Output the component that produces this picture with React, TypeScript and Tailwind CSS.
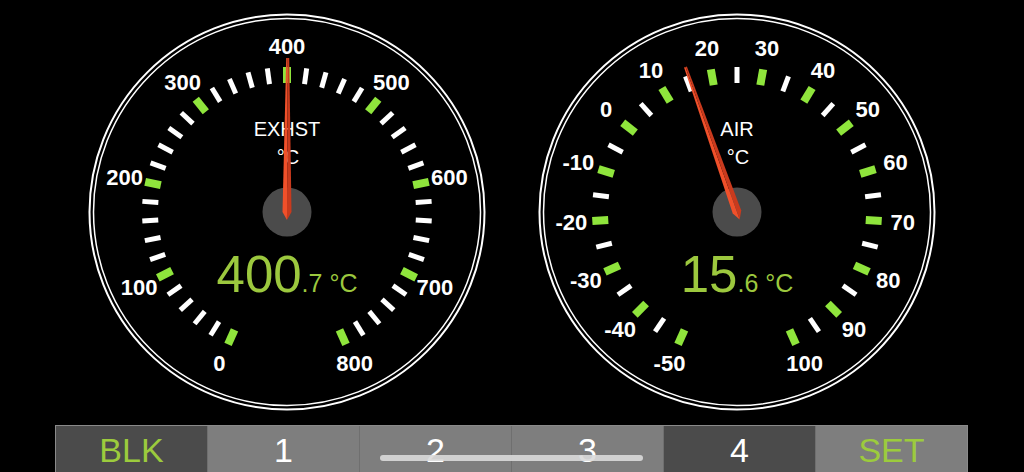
import React from "react";

type GaugeProps = {
    min: number;
    max: number;
    major: number;
    minor: number;
    value: number;
    title: string;
};

const SPAN = 156;
const C = 200;

const polar = (r: number, a: number) => {
    const rad = (a * Math.PI) / 180;
    return { x: C + r * Math.sin(rad), y: C - r * Math.cos(rad) };
};

const Gauge = ({ min, max, major, minor, value, title }: GaugeProps) => {
    const toAngle = (v: number) => -SPAN + ((v - min) / (max - min)) * SPAN * 2;
    const ticks: { v: number; big: boolean }[] = [];
    const count = Math.round((max - min) / minor);
    for (let i = 0; i <= count; i++) {
        const v = min + i * minor;
        ticks.push({ v, big: Math.abs((v - min) % major) < 0.001 });
    }
    const needle = toAngle(value);
    const whole = Math.trunc(value).toString();
    const frac = "." + Math.round((Math.abs(value) % 1) * 10).toString();

    return (
        <svg width={400} height={400} viewBox="0 0 400 400" className="shrink-0">
            <circle cx={C} cy={C} r={197.5} fill="none" stroke="#ffffff" strokeWidth={2} />
            <circle cx={C} cy={C} r={193.5} fill="none" stroke="#ffffff" strokeWidth={1.5} />

            {ticks.map((t) =>
                t.big ? (
                    <rect
                        key={t.v}
                        x={-4}
                        y={-145}
                        width={8}
                        height={16}
                        fill="#8fe53c"
                        transform={`translate(${C} ${C}) rotate(${toAngle(t.v)})`}
                    />
                ) : (
                    <rect
                        key={t.v}
                        x={-2.5}
                        y={-145}
                        width={5}
                        height={16}
                        fill="#ffffff"
                        transform={`translate(${C} ${C}) rotate(${toAngle(t.v)})`}
                    />
                )
            )}

            {ticks
                .filter((t) => t.big)
                .map((t) => {
                    const p = polar(166, toAngle(t.v));
                    return (
                        <text
                            key={`l${t.v}`}
                            x={p.x}
                            y={p.y}
                            fill="#ffffff"
                            fontSize={22}
                            fontWeight={700}
                            textAnchor="middle"
                            dominantBaseline="central"
                            fontFamily='"Liberation Sans", Arial, sans-serif'
                        >
                            {t.v}
                        </text>
                    );
                })}

            <g fontFamily='"Liberation Sans", Arial, sans-serif' fill="#ffffff" textAnchor="middle">
                <text x={C} y={117} fontSize={20} dominantBaseline="central">
                    {title}
                </text>
                <text x={C + 1} y={145} fontSize={20} dominantBaseline="central">
                    °C
                </text>
            </g>

            <text
                x={C}
                y={280}
                fill="#9cc83e"
                textAnchor="middle"
                fontFamily='"Liberation Sans", Arial, sans-serif'
            >
                <tspan fontSize={51}>{whole}</tspan>
                <tspan fontSize={25}>{frac}</tspan>
                <tspan fontSize={25}> °C</tspan>
            </text>

            <circle cx={C} cy={C} r={24.5} fill="#4b4b4b" />

            <g transform={`translate(${C} ${C}) rotate(${needle})`}>
                <polygon points="-1.5,-154 0,-154 0,8 -4.5,0" fill="#f0502a" />
                <polygon points="0,-154 1.5,-154 4.5,0 0,8" fill="#c93a1d" />
            </g>
        </svg>
    );
};

const cells = [
    { label: "BLK", dark: true, green: true },
    { label: "1", dark: false, green: false },
    { label: "2", dark: false, green: false },
    { label: "3", dark: false, green: false },
    { label: "4", dark: true, green: false },
    { label: "SET", dark: false, green: true },
];

export default function App() {
    return (
        <div
            className="relative h-[472px] w-[1024px] overflow-hidden bg-black"
            style={{ fontFamily: '"Liberation Sans", Arial, sans-serif' }}
        >
            <div className="flex gap-[50px] pl-[87px] pt-[12px]">
                <Gauge min={0} max={800} major={100} minor={20} value={400.7} title="EXHST" />
                <Gauge min={-50} max={100} major={10} minor={5} value={15.6} title="AIR" />
            </div>

            <div className="ml-[55px] mt-[13px] flex h-[50px] w-[913px] border border-[#8a8a8a]">
                {cells.map((c, i) => (
                    <div
                        key={c.label}
                        className={`flex flex-1 items-start justify-center pt-[4px] text-[34px] leading-[40px] ${
                            c.dark ? "bg-[#4b4b4b]" : "bg-[#7e7e7e]"
                        } ${c.green ? "text-[#9ccb3d]" : "text-white"} ${
                            i < cells.length - 1 ? "border-r border-[#6f6f6f]" : ""
                        }`}
                    >
                        {c.label}
                    </div>
                ))}
            </div>

            <div className="absolute left-[380px] top-[455px] h-[6px] w-[263px] rounded-full bg-[#dadada]/90" />
        </div>
    );
}
